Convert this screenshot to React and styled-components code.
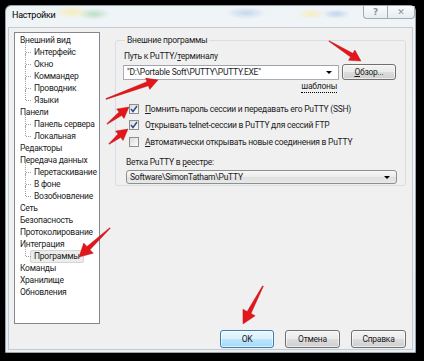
import React from "react";
import styled, { createGlobalStyle, css } from "styled-components";

const GlobalStyle = createGlobalStyle`
  html, body { margin: 0; padding: 0; background: #000; }
  body { font-family: Roboto, "Liberation Sans", Arial, sans-serif; font-size: 8.5px; letter-spacing: -0.25px; color: #1c1c1c; }
  * { box-sizing: border-box; }
`;

const Frame = styled.div`
  position: relative;
  width: 424px;
  height: 361px;
  background: #000;
  padding: 5px 0 0 5px;
  overflow: hidden;
`;

const Window = styled.div`
  width: 411px;
  height: 348px;
  border-radius: 6px 6px 0 0;
  border: 1px solid #9aa4ad;
  background:
    radial-gradient(ellipse 18px 6px at 66px 6px, rgba(255, 230, 120, 0.5), transparent),
    radial-gradient(ellipse 16px 6px at 88px 8px, rgba(120, 200, 140, 0.45), transparent),
    radial-gradient(ellipse 20px 6px at 240px 7px, rgba(150, 180, 230, 0.45), transparent),
    radial-gradient(ellipse 14px 5px at 305px 8px, rgba(255, 230, 120, 0.45), transparent),
    radial-gradient(ellipse 14px 5px at 330px 8px, rgba(150, 180, 230, 0.5), transparent),
    linear-gradient(180deg, #eef3f6 0%, #f7f9fa 30%, #e9eef2 100%);
  padding: 0 2px 2px 2px;
  display: flex;
  flex-direction: column;
`;

const TitleBar = styled.div`
  height: 21px;
  display: flex;
  align-items: flex-start;
  justify-content: space-between;
  padding-left: 4px;
`;

const Title = styled.span`
  margin-top: 4px;
  font-size: 9px;
  color: #000;
`;

const Caption = styled.div`
  display: flex;
  margin-right: -2px;
`;

const CaptionButton = styled.div`
  width: ${(p) => p.$w}px;
  height: 13px;
  border: 1px solid #a3acb6;
  border-top: none;
  ${(p) => (p.$first ? "border-radius: 0 0 0 4px; border-right: none;" : "border-radius: 0 0 4px 0;")}
  background: linear-gradient(180deg, rgba(255,255,255,0.7), rgba(225,232,238,0.6));
  display: flex;
  align-items: center;
  justify-content: center;
  color: #8a939c;
  font-family: "DejaVu Sans", sans-serif;
  font-size: 9px;
  font-weight: bold;
  letter-spacing: 0;
  line-height: 1;
`;

const Client = styled.div`
  flex: 1;
  background: #f0f0f0;
  border: 1px solid #c3cad1;
  padding: 4px 6px 0 5px;
  display: flex;
  flex-direction: column;
`;

const TopRow = styled.div`
  display: flex;
  height: 292px;
`;

const Tree = styled.ul`
  list-style: none;
  margin: 0;
  width: 87px;
  height: 100%;
  background: #fff;
  border: 1px solid #828790;
  padding: 1px 0 0 4px;
`;

const Item = styled.li`
  position: relative;
  height: 12px;
  line-height: 12px;
  white-space: nowrap;
  padding-left: ${(p) => (p.$child ? 14 : 0)}px;

  ${(p) =>
    p.$child &&
    css`
      &::before {
        content: "";
        position: absolute;
        left: 6px;
        top: -4px;
        height: ${p.$last ? 10 : 12}px;
        border-left: 1px dotted #a0a0a0;
      }
      &::after {
        content: "";
        position: absolute;
        left: 7px;
        top: 6px;
        width: 5px;
        border-top: 1px dotted #a0a0a0;
      }
    `}
`;

const ItemText = styled.span`
  display: inline-block;
  padding: 0 1px;
  ${(p) =>
    p.$selected &&
    css`
      background: #ececec;
      border: 1px solid #d4d4d4;
      border-radius: 2px;
      line-height: 11px;
      padding: 0 3px;
      margin-left: -3px;
    `}
`;

const RightPanel = styled.div`
  flex: 1;
  margin-left: 15px;
  padding-top: 2px;
`;

const Group = styled.fieldset`
  margin: 0;
  height: 152px;
  border: 1px solid #d5dfe5;
  border-radius: 3px;
  padding: 0 8px 0 7px;
  display: flex;
  flex-direction: column;
`;

const Legend = styled.legend`
  padding: 0 2px;
  margin-left: 2px;
  line-height: 12px;
`;

const Label = styled.div`
  line-height: 12px;
  margin: ${(p) => p.$m || "0"};
  padding-left: ${(p) => p.$indent || 0}px;
`;

const U = styled.span`
  text-decoration: underline;
`;

const PathRow = styled.div`
  display: flex;
  align-items: center;
  margin-top: 2px;
`;

const Combo = styled.div`
  width: ${(p) => p.$w}px;
  height: ${(p) => p.$h}px;
  margin: ${(p) => p.$m || 0};
  border: 1px solid ${(p) => (p.$button ? "#8e8f8f" : "#abadb3")};
  border-top-color: ${(p) => (p.$button ? "#8e8f8f" : "#a0a3ab")};
  border-radius: ${(p) => (p.$button ? 3 : 1)}px;
  background: ${(p) => (p.$button ? "linear-gradient(180deg, #f6f6f6 0%, #ececec 50%, #dfdfdf 51%, #e9e9e9 100%)" : "#fff")};
  display: flex;
  align-items: center;
  padding: 0 4px 0 3px;
  white-space: nowrap;
`;

const ComboText = styled.span`
  flex: 1;
  overflow: hidden;
`;

const Arrow = styled.span`
  width: 0;
  height: 0;
  border-left: 3px solid transparent;
  border-right: 3px solid transparent;
  border-top: 3px solid #000;
  margin-right: 2px;
`;

const Button = styled.button`
  width: ${(p) => p.$w}px;
  height: ${(p) => p.$h}px;
  margin: 0 0 0 ${(p) => p.$ml || 0}px;
  padding: 0;
  font: inherit;
  letter-spacing: inherit;
  color: #1c1c1c;
  border-radius: 3px;
  border: 1px solid ${(p) => (p.$default ? "#3c7fb1" : "#707070")};
  background: ${(p) =>
    p.$default
      ? "linear-gradient(180deg, #eaf6fd 0%, #d9f0fc 50%, #bee6fd 51%, #a7d9f5 100%)"
      : "linear-gradient(180deg, #f2f2f2 0%, #ebebeb 50%, #dddddd 51%, #cfcfcf 100%)"};
  box-shadow: inset 0 0 0 1px rgba(255, 255, 255, 0.6);
`;

const LinkRow = styled.div`
  display: flex;
  justify-content: flex-end;
  width: 216px;
  margin-top: 1px;
`;

const Link = styled.span`
  line-height: 11px;
  border-bottom: 1px dotted #000;
  margin-right: 2px;
`;

const CheckRow = styled.label`
  display: flex;
  align-items: center;
  height: 12px;
  margin-top: ${(p) => p.$mt}px;
  padding-left: 6px;
  gap: 6px;
  white-space: nowrap;
`;

const Box = styled.span`
  width: 10px;
  height: 10px;
  border: 1px solid #8f8f8f;
  background: linear-gradient(135deg, #dcdcdc, #fbfbfb);
  display: flex;
  align-items: center;
  justify-content: center;
`;

const ButtonRow = styled.div`
  display: flex;
  justify-content: flex-end;
  margin-top: 6px;
`;

const Overlay = styled.svg`
  position: absolute;
  left: 0;
  top: 0;
  pointer-events: none;
`;

function arrowPoints([x1, y1], [x2, y2], head = 11, hw = 6, sw = 2.2) {
  const dx = x2 - x1;
  const dy = y2 - y1;
  const len = Math.hypot(dx, dy);
  const ux = dx / len;
  const uy = dy / len;
  const nx = -uy;
  const ny = ux;
  const bx = x2 - ux * head;
  const by = y2 - uy * head;
  const p = (x, y) => `${x.toFixed(1)},${y.toFixed(1)}`;
  return [
    p(x1 + nx * 0.4, y1 + ny * 0.4),
    p(bx + nx * sw, by + ny * sw),
    p(bx + nx * hw, by + ny * hw),
    p(x2, y2),
    p(bx - nx * hw, by - ny * hw),
    p(bx - nx * sw, by - ny * sw),
    p(x1 - nx * 0.4, y1 - ny * 0.4),
  ].join(" ");
}

const arrows = [
  { from: [329, 41], to: [361, 61] },
  { from: [106, 99], to: [158, 80] },
  { from: [107, 124], to: [129, 107] },
  { from: [109, 144], to: [128, 129] },
  { from: [110, 228], to: [79, 257], head: 13, hw: 7 },
  { from: [263, 286], to: [243, 324], head: 13, hw: 7 },
];

const Check = () => (
  <svg width="8" height="8" viewBox="0 0 8 8">
    <path d="M1 4 L3 6.5 L7 1" fill="none" stroke="#2a4a8a" strokeWidth="1.4" />
  </svg>
);

const tree = [
  { t: "Внешний вид" },
  { t: "Интерфейс", c: 1 },
  { t: "Окно", c: 1 },
  { t: "Коммандер", c: 1 },
  { t: "Проводник", c: 1 },
  { t: "Языки", c: 1, last: 1 },
  { t: "Панели" },
  { t: "Панель сервера", c: 1 },
  { t: "Локальная", c: 1, last: 1 },
  { t: "Редакторы" },
  { t: "Передача данных" },
  { t: "Перетаскивание", c: 1 },
  { t: "В фоне", c: 1 },
  { t: "Возобновление", c: 1, last: 1 },
  { t: "Сеть" },
  { t: "Безопасность" },
  { t: "Протоколирование" },
  { t: "Интеграция" },
  { t: "Программы", c: 1, last: 1, sel: 1 },
  { t: "Команды" },
  { t: "Хранилище" },
  { t: "Обновления" },
];

export default function App() {
  return (
    <Frame>
      <GlobalStyle />
      <Window>
        <TitleBar>
          <Title>Настройки</Title>
          <Caption>
            <CaptionButton $w={24} $first>?</CaptionButton>
            <CaptionButton $w={28}>✕</CaptionButton>
          </Caption>
        </TitleBar>
        <Client>
          <TopRow>
            <Tree>
              {tree.map((n) => (
                <Item key={n.t} $child={!!n.c} $last={!!n.last}>
                  <ItemText $selected={!!n.sel}>{n.t}</ItemText>
                </Item>
              ))}
            </Tree>
            <RightPanel>
              <Group>
                <Legend>Внешние программы</Legend>
                <Label $indent={1} $m="4px 0 0 0">
                  Путь к PuTTY/<U>т</U>ерминалу
                </Label>
                <PathRow>
                  <Combo $w={216} $h={15}>
                    <ComboText>"D:\Portable Soft\PUTTY\PUTTY.EXE"</ComboText>
                    <Arrow />
                  </Combo>
                  <Button $w={54} $h={16} $ml={3}>
                    <U>О</U>бзор...
                  </Button>
                </PathRow>
                <LinkRow>
                  <Link>шаблоны</Link>
                </LinkRow>
                <CheckRow $mt={10}>
                  <Box><Check /></Box>
                  <span><U>П</U>омнить пароль сессии и передавать его PuTTY (SSH)</span>
                </CheckRow>
                <CheckRow $mt={4}>
                  <Box><Check /></Box>
                  <span>О<U>т</U>крывать telnet-сессии в PuTTY для сессий FTP</span>
                </CheckRow>
                <CheckRow $mt={5}>
                  <Box />
                  <span><U>А</U>втоматически открывать новые соединения в PuTTY</span>
                </CheckRow>
                <Label $indent={3} $m="8px 0 0 0">
                  Ветка PuTTY в <U>р</U>еестре:
                </Label>
                <Combo $w={271} $h={14} $button $m="2px 0 0 3px">
                  <ComboText>Software\SimonTatham\PuTTY</ComboText>
                  <Arrow />
                </Combo>
              </Group>
            </RightPanel>
          </TopRow>
          <ButtonRow>
            <Button $w={54} $h={18} $default>OK</Button>
            <Button $w={55} $h={18} $ml={11}>Отмена</Button>
            <Button $w={55} $h={18} $ml={11}>Справка</Button>
          </ButtonRow>
        </Client>
      </Window>
      <Overlay width="424" height="361" viewBox="0 0 424 361">
        {arrows.map((a, i) => (
          <polygon key={i} points={arrowPoints(a.from, a.to, a.head, a.hw)} fill="#e3161c" stroke="#b00d12" strokeWidth="0.4" />
        ))}
      </Overlay>
    </Frame>
  );
}
